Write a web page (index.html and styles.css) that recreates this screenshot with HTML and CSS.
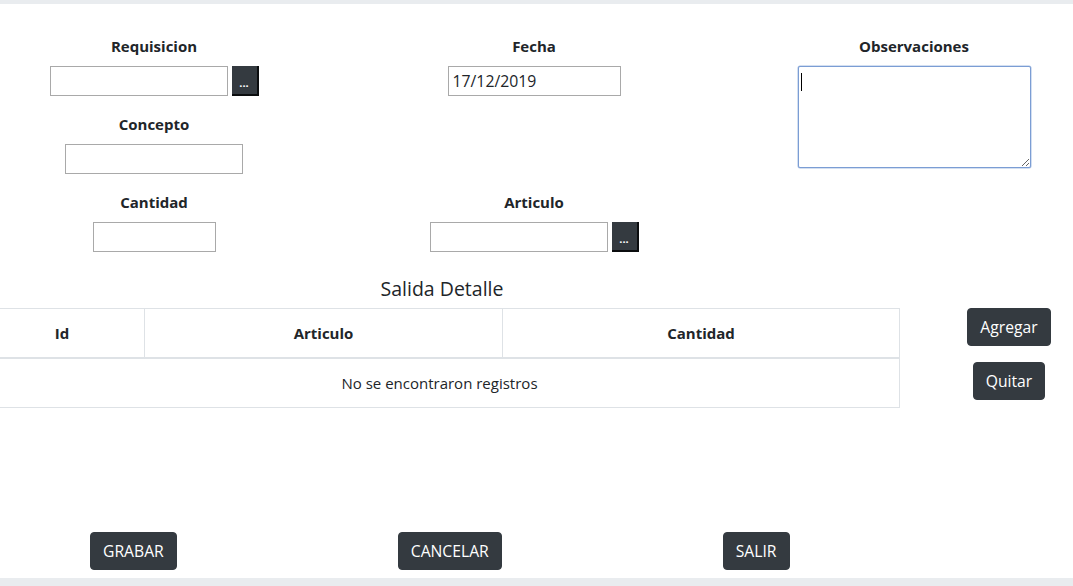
FILE: index.html
```html
<!DOCTYPE html>
<html lang="es">
<head>
<meta charset="utf-8">
<title>Salida</title>
<link rel="stylesheet" href="styles.css">
</head>
<body>
<div class="topbar"></div>
<main class="page">
  <section class="form-grid">
    <div class="field">
      <label class="label">Requisicion</label>
      <div class="group">
        <input class="input w178" type="text">
        <button class="dots" type="button">...</button>
      </div>
    </div>
    <div class="field">
      <label class="label">Fecha</label>
      <div class="group">
        <input class="input w173 date" type="text" value="17/12/2019">
      </div>
    </div>
    <div class="field span2">
      <label class="label">Observaciones</label>
      <div class="group">
        <span class="ta-wrap">
          <textarea class="textarea"></textarea>
          <span class="caret"></span>
        </span>
      </div>
    </div>
    <div class="field">
      <label class="label">Concepto</label>
      <div class="group">
        <input class="input w178" type="text">
      </div>
    </div>
    <div class="field col1">
      <label class="label">Cantidad</label>
      <div class="group">
        <input class="input w123" type="text">
      </div>
    </div>
    <div class="field">
      <label class="label">Articulo</label>
      <div class="group">
        <input class="input w178" type="text">
        <button class="dots" type="button">...</button>
      </div>
    </div>
  </section>

  <section class="detail">
    <div class="detail-main">
      <h4 class="title">Salida Detalle</h4>
      <table class="table">
        <colgroup>
          <col class="c-id"><col class="c-art"><col class="c-cant">
        </colgroup>
        <thead>
          <tr><th>Id</th><th>Articulo</th><th>Cantidad</th></tr>
        </thead>
        <tbody>
          <tr><td colspan="3">No se encontraron registros</td></tr>
        </tbody>
      </table>
    </div>
    <div class="detail-side">
      <button class="btn" type="button">Agregar</button>
      <button class="btn" type="button">Quitar</button>
    </div>
  </section>

  <section class="actions">
    <button class="btn" type="button">GRABAR</button>
    <button class="btn" type="button">CANCELAR</button>
    <button class="btn" type="button">SALIR</button>
  </section>
</main>
<div class="bottombar"></div>
</body>
</html>
```

FILE: styles.css
```css
html, body {
  margin: 0;
  padding: 0;
  background: #ffffff;
  overflow: hidden;
}
body {
  width: 1073px;
  height: 586px;
  font-family: "Open Sans", "Noto Sans", sans-serif;
  font-size: 15px;
  color: #212529;
  display: flex;
  flex-direction: column;
  position: relative;
}
.topbar {
  height: 4px;
  background: #e9ecef;
  flex: none;
}
.bottombar {
  position: absolute;
  left: 0;
  right: 0;
  bottom: 0;
  height: 8px;
  background: #e9ecef;
}
.page {
  margin-left: -36px;
  width: 1140px;
  flex: 1;
  display: flex;
  flex-direction: column;
}

/* form */
.form-grid {
  padding-top: 30px;
  display: grid;
  grid-template-columns: 380px 380px 380px;
  grid-auto-rows: 78px;
}
.field {
  display: flex;
  flex-direction: column;
  align-items: center;
}
.span2 { grid-row: span 2; }
.col1 { grid-column: 1; }
.label {
  font-weight: 700;
  line-height: 24px;
  height: 24px;
  margin-bottom: 8px;
}
.group {
  display: flex;
  gap: 4px;
  align-items: flex-start;
}
.input {
  box-sizing: border-box;
  height: 30px;
  border: 1px solid #a9a9a9;
  background: #fff;
  padding: 1px 4px;
  font-family: "Open Sans", "Noto Sans", sans-serif;
  font-size: 15px;
  color: #212529;
  margin: 0;
}
.w178 { width: 178px; }
.w173 { width: 173px; }
.w123 { width: 123px; }
.date { font-size: 15.8px; }
.dots {
  box-sizing: border-box;
  width: 27px;
  height: 30px;
  margin: 0;
  padding: 6px 0 0 0;
  background: #343a40;
  color: #fff;
  border: 0;
  border-right: 2px solid #0b0d0f;
  border-bottom: 2px solid #0b0d0f;
  font-family: "Open Sans", sans-serif;
  font-size: 11px;
  font-weight: 700;
  line-height: 14px;
}
.ta-wrap {
  position: relative;
  display: block;
  width: 233px;
  height: 102px;
}
.textarea {
  box-sizing: border-box;
  display: block;
  width: 233px;
  height: 102px;
  margin: 0;
  border: 1px solid #7b9dd4;
  border-radius: 2px;
  box-shadow: 0 0 0 0.5px #a8bfe4;
  outline: none;
  background: #fff;
}
.caret {
  position: absolute;
  left: 3px;
  top: 7px;
  width: 1px;
  height: 18px;
  background: #000;
}

/* detail */
.detail {
  display: grid;
  grid-template-columns: 950px 190px;
}
.detail-main {
  padding: 0 15px;
}
.title {
  margin: 7px 0 5px;
  font-size: 19.5px;
  font-weight: 400;
  line-height: 28px;
  text-align: center;
  padding-left: 6px;
}
.table {
  width: 920px;
  border-collapse: collapse;
  table-layout: fixed;
}
.c-id { width: 165px; }
.c-art { width: 358px; }
.c-cant { width: 397px; }
.table th,
.table td {
  border: 1px solid #dee2e6;
  padding: 12px;
  line-height: 24px;
  text-align: center;
}
.table th {
  font-weight: 700;
  border-bottom: 2px solid #dee2e6;
}
.detail-side {
  padding-top: 40px;
  display: flex;
  flex-direction: column;
  align-items: center;
  gap: 16px;
}

.btn {
  box-sizing: border-box;
  height: 38px;
  padding: 6px 12px;
  margin: 0;
  background: #343a40;
  color: #fff;
  border: 1px solid #343a40;
  border-radius: 4px;
  font-family: "Open Sans", "Noto Sans", sans-serif;
  font-size: 15.7px;
  line-height: 24px;
}

.actions {
  margin-top: 124px;
  padding-left: 126px;
  display: flex;
  gap: 221px;
  align-items: flex-start;
}
```
